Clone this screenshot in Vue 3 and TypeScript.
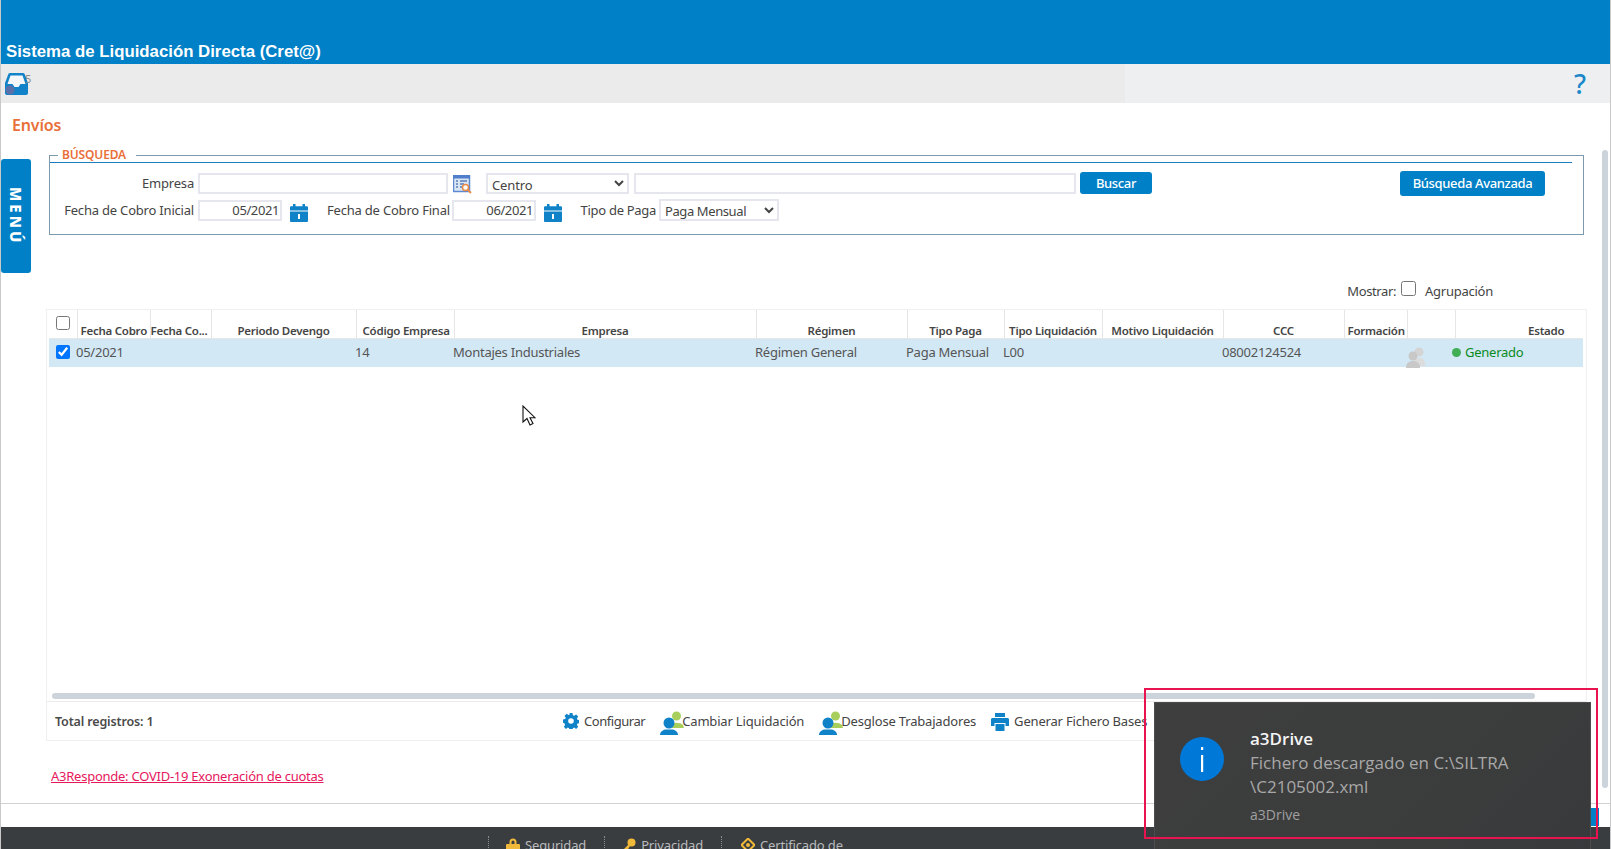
<script setup lang="ts">
interface Column {
  label: string
  width: number
  align: 'left' | 'center'
  pad: number
}

const columns: Column[] = [
  { label: 'Fecha Cobro', width: 73, align: 'left', pad: 3 },
  { label: 'Fecha Co...', width: 61, align: 'left', pad: 0 },
  { label: 'Periodo Devengo', width: 145, align: 'center', pad: 0 },
  { label: 'Código Empresa', width: 98, align: 'left', pad: 6 },
  { label: 'Empresa', width: 302, align: 'center', pad: 0 },
  { label: 'Régimen', width: 151, align: 'center', pad: 0 },
  { label: 'Tipo Paga', width: 97, align: 'center', pad: 0 },
  { label: 'Tipo Liquidación', width: 98, align: 'center', pad: 0 },
  { label: 'Motivo Liquidación', width: 121, align: 'center', pad: 0 },
  { label: 'CCC', width: 121, align: 'center', pad: 0 },
  { label: 'Formación', width: 63, align: 'left', pad: 3 },
  { label: '', width: 48, align: 'left', pad: 0 },
  { label: 'Estado', width: 182, align: 'center', pad: 0 },
]

const row = ['05/2021', '', '', '14', 'Montajes Industriales', 'Régimen General', 'Paga Mensual', 'L00', '', '08002124524']

const tableWidth = columns.reduce((sum, c) => sum + c.width, 28)
</script>

<template>
  <div class="page">
    <header class="top-bar">
      <span class="app-title">Sistema de Liquidación Directa (Cret@)</span>
    </header>

    <div class="tool-bar">
      <div class="inbox">
        <svg width="24" height="24" viewBox="0 0 24 24">
          <path d="M5 1h13c.8 0 1.3.4 1.6 1l3.4 9v10c0 1.2-.8 2-2 2H2c-1.200 0-2-.8-2-2V11L3.400 2C3.700 1.400 4.200 1 5 1z" fill="#1283c9" />
          <path d="M5.500 3.500h12l3 8.500h-5l-2 3H9.500l-2-3h-5z" fill="#f4f7f9" />
          <circle cx="5" cy="18" r="4.500" fill="#5b6fa8" />
        </svg>
        <span class="inbox-count">5</span>
      </div>
      <span class="help">?</span>
    </div>

    <main class="content">
      <h1 class="section-title">Envíos</h1>

      <fieldset class="search">
        <legend>BÚSQUEDA</legend>
        <div class="search-inner">
          <div class="search-row">
            <label class="lbl lbl-empresa">Empresa</label>
            <input class="field field-empresa" type="text" />
            <svg class="lookup" width="19" height="19" viewBox="0 0 19 19">
              <rect x="0.500" y="0.500" width="16" height="16" fill="#dbe6f5" stroke="#5b8ad0" stroke-width="1.500" />
              <rect x="0" y="0" width="17" height="3.500" fill="#4f7fcb" />
              <path d="M3 6h2M7 6h7M3 9h2M7 9h4M3 12h2M7 12h2" stroke="#5a7fb5" stroke-width="1.300" />
              <circle cx="12.500" cy="12.500" r="3" fill="#fff" stroke="#e98a45" stroke-width="1.500" />
              <path d="M15 15l3 3" stroke="#e98a45" stroke-width="1.800" />
            </svg>
            <select class="field select-centro">
              <option>Centro</option>
            </select>
            <input class="field field-centro" type="text" />
            <button class="btn btn-buscar" type="button">Buscar</button>
            <button class="btn btn-avanzada" type="button">Búsqueda Avanzada</button>
          </div>
          <div class="search-row row-two">
            <label class="lbl lbl-inicial">Fecha de Cobro Inicial</label>
            <input class="field field-date" type="text" value="05/2021" />
            <svg class="cal" width="18" height="18" viewBox="0 0 18 18">
              <path d="M0 3.500c0-.8.500-1.300 1.300-1.300H3V0h2.500v2.200h7V0H15v2.200h1.700c.8 0 1.300.5 1.300 1.300V6.500H0zM0 7.500h18v9.200c0 .8-.5 1.300-1.300 1.300H1.300C.5 18 0 17.500 0 16.700z" fill="#0f82c8" />
              <rect x="8" y="10" width="2" height="5" fill="#fff" />
            </svg>
            <label class="lbl lbl-final">Fecha de Cobro Final</label>
            <input class="field field-date" type="text" value="06/2021" />
            <svg class="cal" width="18" height="18" viewBox="0 0 18 18">
              <path d="M0 3.500c0-.8.500-1.300 1.300-1.300H3V0h2.500v2.200h7V0H15v2.200h1.700c.8 0 1.300.5 1.300 1.300V6.500H0zM0 7.500h18v9.200c0 .8-.5 1.300-1.300 1.300H1.300C.5 18 0 17.500 0 16.700z" fill="#0f82c8" />
              <rect x="8" y="10" width="2" height="5" fill="#fff" />
            </svg>
            <label class="lbl lbl-tipo">Tipo de Paga</label>
            <select class="field select-tipo">
              <option>Paga Mensual</option>
            </select>
          </div>
        </div>
      </fieldset>

      <div class="show-row">
        <span class="show-text">Mostrar:</span>
        <input class="show-check" type="checkbox" />
        <span class="show-label">Agrupación</span>
      </div>

      <section class="grid-box">
        <div class="grid-scroll">
          <div class="grid-clip">
            <table class="grid" :style="{ width: tableWidth + 'px' }">
              <colgroup>
                <col class="col-check" />
                <col v-for="c in columns" :key="c.label" :style="{ width: c.width + 'px' }" />
              </colgroup>
              <thead>
                <tr>
                  <th class="th-check"><input type="checkbox" /></th>
                  <th
                    v-for="c in columns"
                    :key="c.label"
                    :style="{ textAlign: c.align, paddingLeft: c.pad + 'px' }"
                  >{{ c.label }}</th>
                </tr>
              </thead>
              <tbody>
                <tr class="selected">
                  <td class="td-check"><input type="checkbox" checked /></td>
                  <td v-for="(cell, i) in row" :key="i"><span class="cell">{{ cell }}</span></td>
                  <td></td>
                  <td class="td-user">
                    <svg width="22" height="22" viewBox="0 0 22 22">
                      <circle cx="14" cy="6" r="4.500" fill="#d4d4d4" />
                      <path d="M9 14c1-3 8-3 10 0l2 6H11z" fill="#dcdcdc" />
                      <circle cx="8" cy="10" r="4.500" fill="#c8c8c8" />
                      <path d="M1 22c0-5 3-7 7-7s7 2 7 7z" fill="#c8c8c8" />
                    </svg>
                  </td>
                  <td class="td-state"><i class="state-dot"></i>Generado</td>
                </tr>
              </tbody>
            </table>
          </div>
          <div class="h-scroll"></div>
        </div>

        <footer class="grid-footer">
          <strong class="total">Total registros: 1</strong>
          <div class="actions">
            <span class="action action-config">
              <svg width="16" height="16" viewBox="0 0 16 16">
                <path fill="#0f82c8" fill-rule="evenodd" d="M6.500 0h3l.4 2.200 1.300.6 1.900-1.300 2.100 2.100-1.300 1.900.6 1.300 2.200.4v3l-2.200.4-.6 1.300 1.300 1.900-2.100 2.100-1.900-1.300-1.300.6-.4 2.200h-3l-.4-2.200-1.300-.6-1.900 1.300-2.100-2.100 1.300-1.900-.6-1.300L0 9.500v-3l2.200-.4.6-1.300L1.500 2.900l2.100-2.100 1.900 1.300 1.300-.6zM8 5.200a2.800 2.800 0 1 0 0 5.600 2.800 2.800 0 0 0 0-5.600z" />
              </svg>
              Configurar
            </span>
            <span class="action action-user">
              <svg width="24" height="24" viewBox="0 0 24 24">
                <circle cx="16.500" cy="5" r="4.500" fill="#a8cf5c" />
                <path d="M11 14c2-3 9-3 12 0l1 3H12z" fill="#a8cf5c" />
                <circle cx="9" cy="12" r="5.500" fill="#0f82c8" />
                <path d="M0 24c0-2 1-4 5-5.500h8c4 1.500 5 3.500 5 5.500z" fill="#0f82c8" />
              </svg>
              Cambiar Liquidación
            </span>
            <span class="action action-user">
              <svg width="24" height="24" viewBox="0 0 24 24">
                <circle cx="16.500" cy="5" r="4.500" fill="#a8cf5c" />
                <path d="M11 14c2-3 9-3 12 0l1 3H12z" fill="#a8cf5c" />
                <circle cx="9" cy="12" r="5.500" fill="#0f82c8" />
                <path d="M0 24c0-2 1-4 5-5.500h8c4 1.500 5 3.500 5 5.500z" fill="#0f82c8" />
              </svg>
              Desglose Trabajadores
            </span>
            <span class="action action-print">
              <svg width="18" height="18" viewBox="0 0 18 18">
                <path fill="#0f82c8" d="M4 0h10v4H4zM1.500 5h15c.9 0 1.500.6 1.500 1.500V13h-3.500v-3h-11v3H0V6.500C0 5.600.6 5 1.500 5zM4.500 11h9v7h-9z" />
              </svg>
              Generar Fichero Bases
            </span>
          </div>
        </footer>
      </section>

      <a class="news-link" href="#">A3Responde: COVID-19 Exoneración de cuotas</a>
    </main>

    <footer class="page-footer">
      <span class="foot-sep"></span>
      <span class="foot-item">
        <svg width="14" height="14" viewBox="0 0 14 14">
          <path d="M3.500 6V4a3.500 3.500 0 0 1 7 0v2h-2V4a1.500 1.500 0 0 0-3 0v2z" fill="#f0b93a" />
          <rect x="0" y="6" width="14" height="8" rx="1" fill="#f0b93a" />
        </svg>
        Seguridad
      </span>
      <span class="foot-sep"></span>
      <span class="foot-item">
        <svg width="14" height="14" viewBox="0 0 14 14">
          <circle cx="9.500" cy="4.500" r="4" fill="#f0b93a" />
          <path d="M7 6L1 12l1 2 3-1 3-5z" fill="#f0b93a" />
        </svg>
        Privacidad
      </span>
      <span class="foot-sep"></span>
      <span class="foot-item foot-cert">
        <svg width="14" height="14" viewBox="0 0 14 14">
          <path d="M7 .5L13.500 7 7 13.500.5 7z" fill="none" stroke="#f0b93a" stroke-width="2" stroke-linejoin="round" />
          <circle cx="7" cy="7" r="2" fill="#f0b93a" />
        </svg>
        Certificado de
      </span>
    </footer>

    <div class="menu-tab"><span>MENÚ</span></div>
    <div class="v-scroll"></div>
    <div class="peek-btn"></div>

    <svg class="cursor" width="14" height="22" viewBox="0 0 14 22">
      <path d="M1 1v16l4-3.500L8 20l3-1.500-3-5.800h5z" fill="#fff" stroke="#111" stroke-width="1.100" stroke-linejoin="miter" />
    </svg>

    <aside class="toast">
      <div class="toast-icon">
        <svg width="44" height="44" viewBox="0 0 44 44">
          <circle cx="22" cy="22" r="22" fill="#0078d7" />
          <rect x="21" y="18" width="2.200" height="17" fill="#fff" />
          <rect x="21" y="10" width="2.200" height="3" fill="#fff" />
        </svg>
      </div>
      <div class="toast-body">
        <div class="toast-title">a3Drive</div>
        <div class="toast-text">Fichero descargado en C:\SILTRA<br />\C2105002.xml</div>
        <div class="toast-source">a3Drive</div>
      </div>
    </aside>
    <div class="highlight"></div>
  </div>
</template>

<style>
html,
body {
  margin: 0;
  overflow: hidden;
  background: #fff;
}
</style>

<style scoped>
* {
  box-sizing: border-box;
}

.page {
  position: relative;
  display: flex;
  flex-direction: column;
  width: 1611px;
  height: 849px;
  overflow: hidden;
  background: #fff;
  border-left: 1px solid #c9c9c9;
  border-right: 1px solid #c9c9c9;
  color: #444;
  font-family: 'Noto Sans', sans-serif;
  font-size: 13px;
  letter-spacing: -0.15px;
}

.top-bar {
  display: flex;
  align-items: flex-end;
  height: 64px;
  padding: 0 0 2px 5px;
  background: #0080c6;
}

.app-title {
  color: #fff;
  font-family: 'Liberation Sans', Arial, sans-serif;
  font-size: 16.800px;
  font-weight: 700;
  letter-spacing: 0;
  line-height: 20px;
}

.tool-bar {
  display: flex;
  align-items: center;
  justify-content: space-between;
  height: 39px;
  padding: 0 24px 0 4px;
  background: linear-gradient(to right, #ebebeb 1124px, #eeeff1 1124px);
}

.inbox {
  display: flex;
  align-items: flex-start;
}

.inbox-count {
  margin: 0 0 0 -4px;
  color: #8d8d8d;
  font-size: 11px;
  line-height: 14px;
}

.help {
  color: #1a87c9;
  font-size: 27px;
  font-weight: 500;
  line-height: 30px;
}

.content {
  flex: 1;
  min-height: 0;
  padding: 11px 0 0;
  border-bottom: 1px solid #d2d2d2;
}

.section-title {
  margin: 0 0 0 11px;
  color: #e9703a;
  font-size: 16px;
  font-weight: 600;
  line-height: 23px;
}

.search {
  width: 1535px;
  height: 87px;
  margin: 11px 0 0 48px;
  padding: 0 11px 0 0;
  border: 1px solid #7d99ad;
  min-inline-size: auto;
}

.search legend {
  margin-left: 8px;
  padding: 0 10px 0 4px;
  color: #e9703a;
  font-size: 12px;
  font-weight: 600;
  line-height: 14px;
}

.search-inner {
  padding-top: 9px;
  border-top: 1px solid #1b7fbd;
}

.search-row {
  display: flex;
  align-items: center;
  height: 22px;
}

.row-two {
  margin-top: 5px;
}

.lbl {
  flex: none;
  color: #444;
  letter-spacing: -0.2px;
  line-height: 20px;
  text-align: right;
}

.lbl-empresa {
  width: 144px;
}

.lbl-inicial {
  width: 144px;
  white-space: nowrap;
}

.lbl-final {
  width: 121px;
  margin-left: 19px;
  white-space: nowrap;
}

.lbl-tipo {
  width: 77px;
  margin-left: 17px;
  letter-spacing: -0.3px;
  white-space: nowrap;
}

.field {
  flex: none;
  height: 21px;
  margin-left: 4px;
  padding: 0 3px;
  border: 2px solid #e6e7ee;
  background: #fff;
  color: #444;
  font-family: inherit;
  font-size: 13px;
  letter-spacing: inherit;
  outline: none;
}

.field-empresa {
  width: 250px;
}

.lookup {
  flex: none;
  margin: 3px 0 0 5px;
}

.select-centro {
  width: 143px;
  margin-left: 14px;
  padding: 0;
}

.field-centro {
  width: 442px;
  margin-left: 5px;
}

.field-date {
  width: 84px;
  padding-right: 1px;
  letter-spacing: -0.4px;
  text-align: right;
}

.cal {
  flex: none;
  margin: 5px 0 0 8px;
}

.select-tipo {
  width: 120px;
  height: 22px;
  margin-left: 3px;
  padding: 0;
  letter-spacing: -0.4px;
}

.btn {
  flex: none;
  border: 0;
  border-radius: 3px;
  background: #0080c6;
  color: #fff;
  font-family: inherit;
  font-size: 13px;
  font-weight: 500;
  letter-spacing: -0.35px;
}

.btn-buscar {
  width: 72px;
  height: 22px;
  margin-left: 4px;
}

.btn-avanzada {
  width: 145px;
  height: 25px;
  margin-left: 248px;
}

.show-row {
  display: flex;
  align-items: center;
  justify-content: flex-end;
  height: 20px;
  margin: 46px 117px 0 0;
  color: #444;
}

.show-text {
  letter-spacing: -0.4px;
}

.show-check {
  width: 15px;
  height: 15px;
  margin: -5px 0 0 5px;
}

.show-label {
  margin-left: 9px;
  letter-spacing: -0.25px;
}

.grid-box {
  display: flex;
  flex-direction: column;
  width: 1541px;
  height: 432px;
  margin: 8px 0 0 45px;
  border: 1px solid #f0f0f0;
}

.grid-scroll {
  position: relative;
  flex: 1;
  min-height: 0;
  border-bottom: 1px solid #ececec;
}

.grid-clip {
  height: 100%;
  margin: 0 3px 0 2px;
  overflow: hidden;
}

.grid {
  border-collapse: collapse;
  table-layout: fixed;
}

.col-check {
  width: 28px;
}

.grid th {
  height: 28px;
  padding: 0;
  overflow: hidden;
  border-left: 1px solid #e6e6e6;
  border-bottom: 1px solid #e6e6e6;
  color: #454545;
  font-size: 11.500px;
  font-weight: 600;
  letter-spacing: -0.25px;
  line-height: 14px;
  vertical-align: bottom;
  white-space: nowrap;
}

.grid .th-check {
  border-left: 0;
  vertical-align: top;
}

.grid input {
  display: block;
  width: 14px;
  height: 14px;
  margin: 6px 0 0 7px;
}

.selected {
  background: #d2e8f5;
}

.selected td {
  height: 29px;
  padding: 0 0 2px;
  color: #555;
  font-size: 13px;
  letter-spacing: -0.25px;
  white-space: nowrap;
}

.cell {
  display: inline-block;
  margin-left: -1px;
}

.selected .td-check input {
  margin-top: 0;
}

.td-user svg {
  display: block;
  margin: 5px 0 -5px -2px;
}

.selected .td-state {
  color: #0a8a1e;
}

.state-dot {
  display: inline-block;
  width: 9px;
  height: 9px;
  margin: 0 4px 0 -3px;
  border-radius: 50%;
  background: #3fae55;
}

.h-scroll {
  position: absolute;
  left: 5px;
  right: 51px;
  bottom: 2px;
  height: 6px;
  border-radius: 3px;
  background: #ccd3da;
}

.grid-footer {
  display: flex;
  align-items: center;
  flex: none;
  height: 38px;
  padding-left: 8px;
}

.total {
  width: 508px;
  color: #4a4a4a;
  font-size: 12.500px;
  font-weight: 600;
}

.actions {
  display: flex;
  align-items: center;
  white-space: nowrap;
  letter-spacing: -0.18px;
}

.action {
  display: inline-flex;
  align-items: center;
  color: #444;
}

.action-config {
  letter-spacing: -0.45px;
}

.action-config svg {
  margin-right: 5px;
}

.action-user {
  margin-left: 15px;
}

.action-user svg {
  margin: 3px -2px 0 0;
}

.action-print {
  margin-left: 15px;
}

.action-print svg {
  margin: 1px 5px 0 0;
}

.news-link {
  display: inline-block;
  margin: 26px 0 0 50px;
  color: #e6175c;
  font-size: 13px;
  letter-spacing: -0.25px;
}

.page-footer {
  display: flex;
  flex: none;
  align-items: flex-start;
  height: 22px;
  margin-top: 23px;
  padding: 9px 0 0 487px;
  background: #3a3d40;
  color: #b8bbbd;
  font-size: 13px;
  letter-spacing: -0.15px;
  line-height: 18px;
}

.foot-sep {
  width: 1px;
  height: 12px;
  margin: 0 17px 0 0;
  border-left: 1px dotted #8a8d8f;
}

.foot-item {
  display: inline-flex;
  align-items: flex-start;
  gap: 5px;
  margin-right: 18px;
}

.foot-item svg {
  margin-top: 2px;
}

.foot-cert {
  margin-left: 2px;
}

.menu-tab {
  position: absolute;
  top: 159px;
  left: 0;
  display: flex;
  align-items: center;
  justify-content: center;
  width: 30px;
  height: 114px;
  border-radius: 3px;
  background: #0080c6;
}

.menu-tab span {
  color: #fff;
  font-size: 15px;
  font-weight: 800;
  letter-spacing: 3px;
  writing-mode: vertical-rl;
}

.v-scroll {
  position: absolute;
  top: 150px;
  left: 1601px;
  width: 6px;
  height: 638px;
  border-radius: 3px;
  background: #ccd3da;
}

.peek-btn {
  position: absolute;
  top: 808px;
  left: 1585px;
  width: 13px;
  height: 18px;
  background: #0080c6;
}

.cursor {
  position: absolute;
  top: 405px;
  left: 521px;
}

.toast {
  position: absolute;
  top: 702px;
  left: 1153px;
  display: flex;
  width: 437px;
  height: 160px;
  padding: 25px 0 0 25px;
  background: linear-gradient(135deg, #3e3e3e 0%, #3b3c3c 70%, #37393c 100%);
  border: 1px solid #4d4d4d;
  font-family: 'Open Sans', sans-serif;
  letter-spacing: 0;
}

.toast-icon {
  flex: none;
  width: 70px;
  padding-top: 9px;
  line-height: 0;
}

.toast-title {
  color: #f4f4f4;
  font-size: 17px;
  font-weight: 600;
  line-height: 22px;
}

.toast-text {
  margin-top: 1px;
  color: #a8a8a8;
  font-size: 17px;
  line-height: 23.500px;
}

.toast-source {
  margin-top: 7px;
  color: #a0a0a0;
  font-size: 14px;
  line-height: 20px;
}

.highlight {
  position: absolute;
  top: 688px;
  left: 1143px;
  width: 454px;
  height: 151px;
  border: 2px solid #e8134f;
  pointer-events: none;
}
</style>
